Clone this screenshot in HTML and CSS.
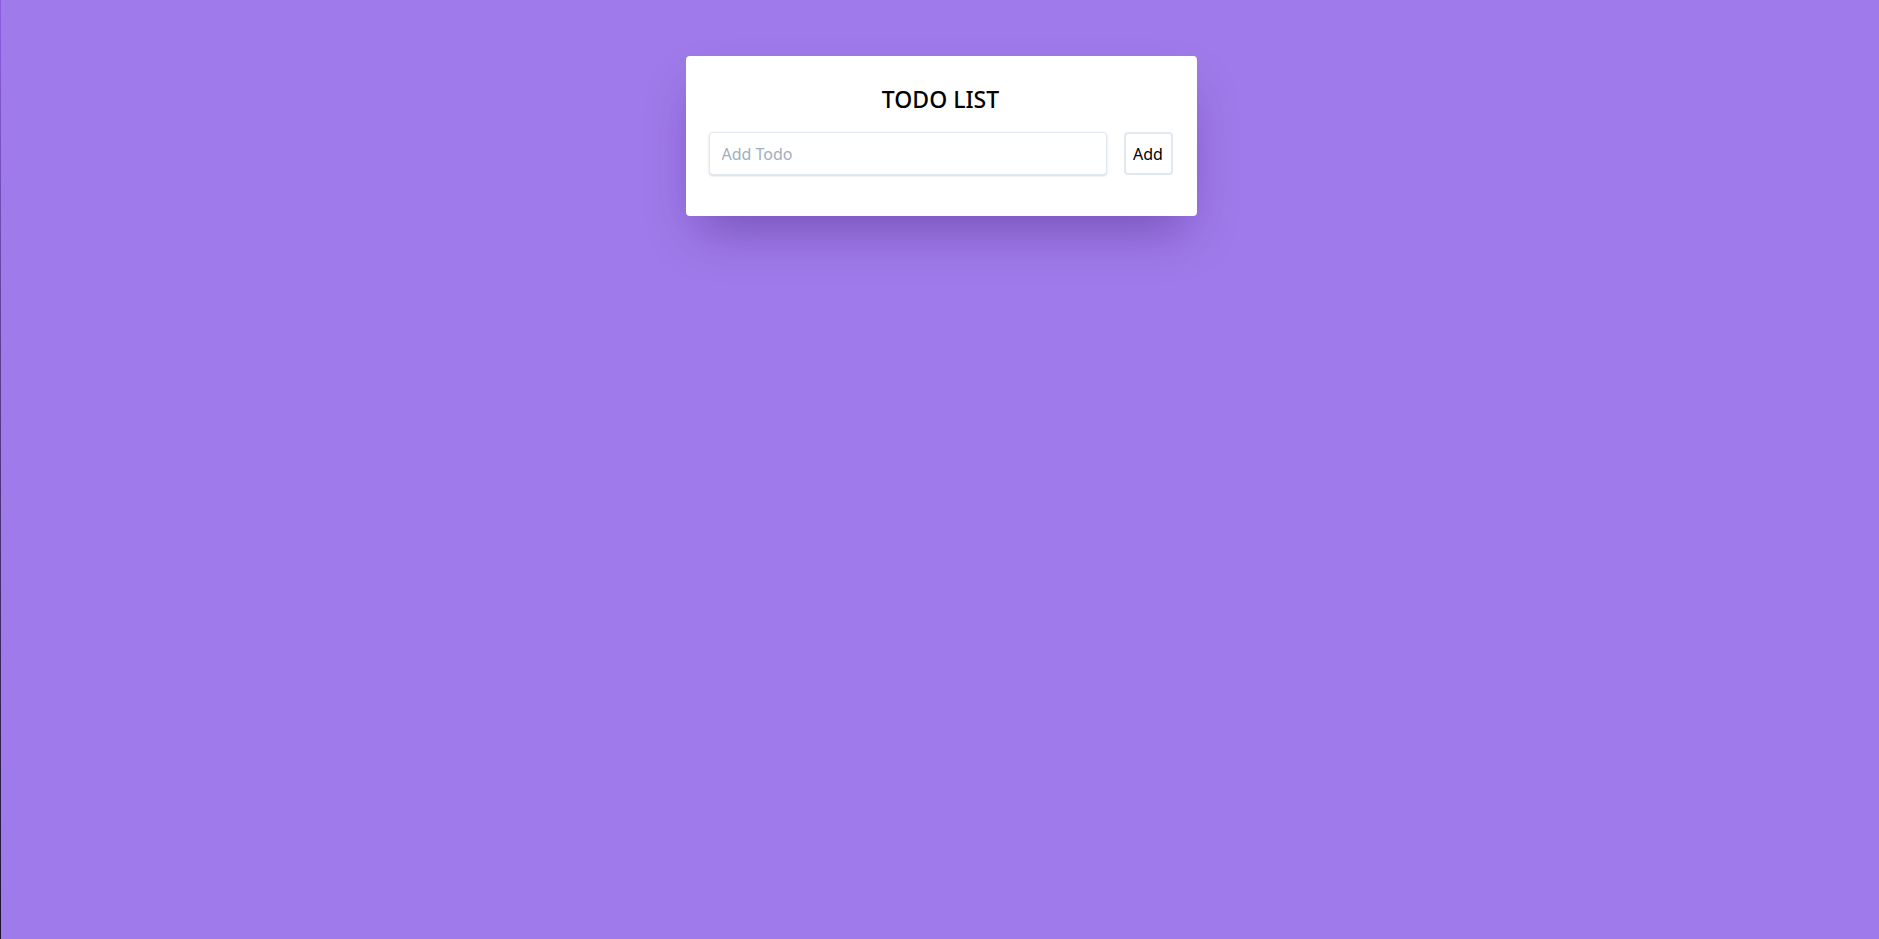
FILE: index.html
```html
<!DOCTYPE html>
<html lang="en">
<head>
<meta charset="utf-8">
<title>Todo List</title>
<link rel="stylesheet" href="styles.css">
</head>
<body>
<div class="edge"></div>
<main class="page">
  <section class="card">
    <h1 class="title">TODO LIST</h1>
    <form class="add-form" onsubmit="return false">
      <input class="todo-input" type="text" placeholder="Add Todo">
      <button class="add-btn" type="submit">Add</button>
    </form>
  </section>
</main>
</body>
</html>
```

FILE: styles.css
```css
* { box-sizing: border-box; }
html, body { margin: 0; padding: 0; height: 100%; }
body {
  background: #9f7aea;
  font-family: "Noto Sans", "Open Sans", "Liberation Sans", sans-serif;
  color: #000;
}
.edge {
  position: fixed;
  left: 0; top: 0; bottom: 0;
  width: 1px;
  background: linear-gradient(to bottom, #8d5fe0, #5b3d8f 40%, #1a1230);
}
.page {
  display: flex;
  justify-content: center;
  padding: 56px 0 0 3px;
}
.card {
  width: 511px;
  background: #fff;
  border-radius: 4px;
  padding: 27px 24px 41px 23px;
  box-shadow: 0 25px 50px -12px rgba(40, 10, 90, 0.35);
}
.title {
  margin: 0 0 17px;
  text-align: center;
  font-size: 23px;
  line-height: 32px;
  font-weight: 500;
}
.add-form {
  display: flex;
  gap: 17px;
  margin: 0;
}
.todo-input {
  flex: 1;
  height: 43px;
  border: 1px solid #e2e8f0;
  border-radius: 4px;
  padding: 0 12px;
  font: inherit;
  font-size: 16px;
  color: #4a5568;
  box-shadow: 0 1px 3px rgba(0,0,0,0.1), 0 1px 2px rgba(0,0,0,0.06);
  outline: none;
}
.todo-input::placeholder { color: #a0aec0; }
.add-btn {
  width: 49px;
  height: 43px;
  background: #fff;
  border: 2px solid #e2e8f0;
  border-radius: 4px;
  font: inherit;
  font-size: 16px;
  color: #000;
  padding: 0;
  cursor: pointer;
}
```
